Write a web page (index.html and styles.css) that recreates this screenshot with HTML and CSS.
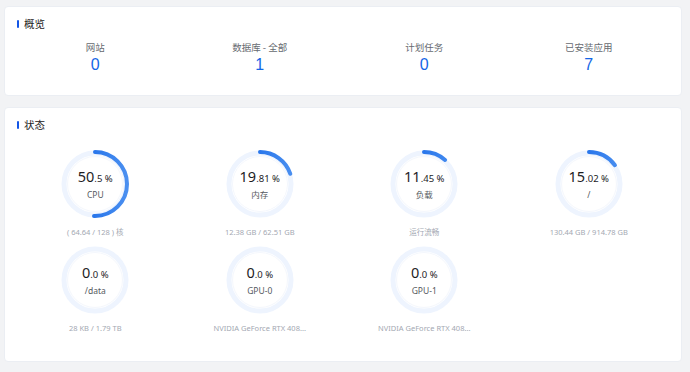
FILE: index.html
```html
<!DOCTYPE html>
<html lang="zh">
<head>
<meta charset="utf-8">
<link rel="stylesheet" href="styles.css">
</head>
<body>
<div class="page">
  <section class="card overview">
    <h2 class="card-title">概览</h2>
    <div class="stats">
      <div class="stat"><div class="stat-label">网站</div><div class="stat-value">0</div></div>
      <div class="stat"><div class="stat-label">数据库 - 全部</div><div class="stat-value">1</div></div>
      <div class="stat"><div class="stat-label">计划任务</div><div class="stat-value">0</div></div>
      <div class="stat"><div class="stat-label">已安装应用</div><div class="stat-value">7</div></div>
    </div>
  </section>
  <section class="card status">
    <h2 class="card-title">状态</h2>
    <div class="gauges">
      <div class="gauge">
        <div class="ring">
          <svg viewBox="0 0 68 68" class="ring-svg">
            <defs><linearGradient id="g" x1="0" y1="0" x2="0" y2="1"><stop offset="0" stop-color="#0a5fe6"/><stop offset="1" stop-color="#4a8ff0"/></linearGradient></defs>
            <circle cx="34" cy="34" r="31" class="track"/>
            <circle cx="34" cy="34" r="27.5" class="inner"/>
            <circle cx="34" cy="34" r="32" class="arc" pathLength="100" stroke-dasharray="50.5 100"/>
          </svg>
          <div class="ring-text"><div class="pct"><span class="int">50</span><span class="dec">.5 %</span></div><div class="ring-label">CPU</div></div>
        </div>
        <div class="caption">( 64.64 / 128 ) 核</div>
      </div>
      <div class="gauge">
        <div class="ring">
          <svg viewBox="0 0 68 68" class="ring-svg">
            <circle cx="34" cy="34" r="31" class="track"/>
            <circle cx="34" cy="34" r="27.5" class="inner"/>
            <circle cx="34" cy="34" r="32" class="arc" pathLength="100" stroke-dasharray="19.81 100"/>
          </svg>
          <div class="ring-text"><div class="pct"><span class="int">19</span><span class="dec">.81 %</span></div><div class="ring-label">内存</div></div>
        </div>
        <div class="caption">12.38 GB / 62.51 GB</div>
      </div>
      <div class="gauge">
        <div class="ring">
          <svg viewBox="0 0 68 68" class="ring-svg">
            <circle cx="34" cy="34" r="31" class="track"/>
            <circle cx="34" cy="34" r="27.5" class="inner"/>
            <circle cx="34" cy="34" r="32" class="arc" pathLength="100" stroke-dasharray="11.45 100"/>
          </svg>
          <div class="ring-text"><div class="pct"><span class="int">11</span><span class="dec">.45 %</span></div><div class="ring-label">负载</div></div>
        </div>
        <div class="caption">运行流畅</div>
      </div>
      <div class="gauge">
        <div class="ring">
          <svg viewBox="0 0 68 68" class="ring-svg">
            <circle cx="34" cy="34" r="31" class="track"/>
            <circle cx="34" cy="34" r="27.5" class="inner"/>
            <circle cx="34" cy="34" r="32" class="arc" pathLength="100" stroke-dasharray="15.02 100"/>
          </svg>
          <div class="ring-text"><div class="pct"><span class="int">15</span><span class="dec">.02 %</span></div><div class="ring-label">/</div></div>
        </div>
        <div class="caption">130.44 GB / 914.78 GB</div>
      </div>
      <div class="gauge">
        <div class="ring">
          <svg viewBox="0 0 68 68" class="ring-svg">
            <circle cx="34" cy="34" r="31" class="track"/>
            <circle cx="34" cy="34" r="27.5" class="inner"/>
          </svg>
          <div class="ring-text"><div class="pct"><span class="int">0</span><span class="dec">.0 %</span></div><div class="ring-label">/data</div></div>
        </div>
        <div class="caption">28 KB / 1.79 TB</div>
      </div>
      <div class="gauge">
        <div class="ring">
          <svg viewBox="0 0 68 68" class="ring-svg">
            <circle cx="34" cy="34" r="31" class="track"/>
            <circle cx="34" cy="34" r="27.5" class="inner"/>
          </svg>
          <div class="ring-text"><div class="pct"><span class="int">0</span><span class="dec">.0 %</span></div><div class="ring-label">GPU-0</div></div>
        </div>
        <div class="caption">NVIDIA GeForce RTX 408...</div>
      </div>
      <div class="gauge">
        <div class="ring">
          <svg viewBox="0 0 68 68" class="ring-svg">
            <circle cx="34" cy="34" r="31" class="track"/>
            <circle cx="34" cy="34" r="27.5" class="inner"/>
          </svg>
          <div class="ring-text"><div class="pct"><span class="int">0</span><span class="dec">.0 %</span></div><div class="ring-label">GPU-1</div></div>
        </div>
        <div class="caption">NVIDIA GeForce RTX 408...</div>
      </div>
    </div>
  </section>
</div>
</body>
</html>
```

FILE: styles.css
```css
* { box-sizing: border-box; }
html, body { margin: 0; padding: 0; }
body {
  background: #f2f3f5;
  font-family: "Noto Sans", "Noto Sans CJK SC", sans-serif;
  color: #303133;
  width: 690px;
  height: 372px;
  overflow: hidden;
}
.page {
  padding: 6px 8px 0 4px;
  display: flex;
  flex-direction: column;
  gap: 11px;
}
.card {
  background: #fff;
  border-radius: 4px;
  border: 1px solid #ebeef3;
  padding: 9px 10px 0 8px;
}
.card-title {
  margin: 0 0 0 4px;
  font-size: 10.5px;
  line-height: 16px;
  font-weight: normal;
  color: #222;
  display: flex;
  align-items: center;
  gap: 5px;
  font-family: "Noto Sans CJK SC", sans-serif;
}
.card-title::before {
  content: "";
  width: 2px;
  height: 8px;
  background: #1456e6;
  border-radius: 1px;
}
.overview { height: 90px; }
.stats {
  display: grid;
  grid-template-columns: repeat(4, 1fr);
  margin-top: 8px;
}
.stat { text-align: center; }
.stat-label {
  font-size: 9.5px;
  line-height: 14px;
  color: #666a70;
  font-family: "Noto Sans CJK SC", sans-serif;
}
.stat-value {
  margin-top: 1px;
  font-size: 16px;
  line-height: 20px;
  color: #1466e6;
  font-family: "Liberation Sans", Arial, sans-serif;
}
.status { height: 255px; }
.gauges {
  display: grid;
  grid-template-columns: repeat(4, 1fr);
  row-gap: 8px;
  margin-top: 17px;
}
.gauge {
  display: flex;
  flex-direction: column;
  align-items: center;
}
.ring {
  position: relative;
  width: 68px;
  height: 68px;
}
.ring-svg {
  position: absolute;
  inset: 0;
  width: 68px;
  height: 68px;
  transform: rotate(-90deg);
}
.track { fill: none; stroke: #eef4fe; stroke-width: 5; }
.inner { fill: none; stroke: #f4f7fd; stroke-width: 1; }
.arc {
  fill: none;
  stroke: url(#g);
  stroke-width: 4;
  stroke-linecap: round;
}
.ring-text {
  position: absolute;
  inset: 0;
  display: flex;
  flex-direction: column;
  align-items: center;
  justify-content: center;
  padding-top: 1px;
}
.pct { line-height: 16px; color: #1d1d1f; white-space: nowrap; }
.int { font-size: 14.5px; }
.dec { font-size: 9.5px; }
.ring-label {
  margin-top: 2px;
  font-size: 8.5px;
  line-height: 12px;
  color: #555a60;
  font-family: "Noto Sans", "Noto Sans CJK SC", sans-serif;
}
.caption {
  margin-top: 8px;
  font-size: 7.5px;
  line-height: 12px;
  color: #a3a8b2;
  white-space: nowrap;
  font-family: "Noto Sans", "Noto Sans CJK SC", sans-serif;
}
```
